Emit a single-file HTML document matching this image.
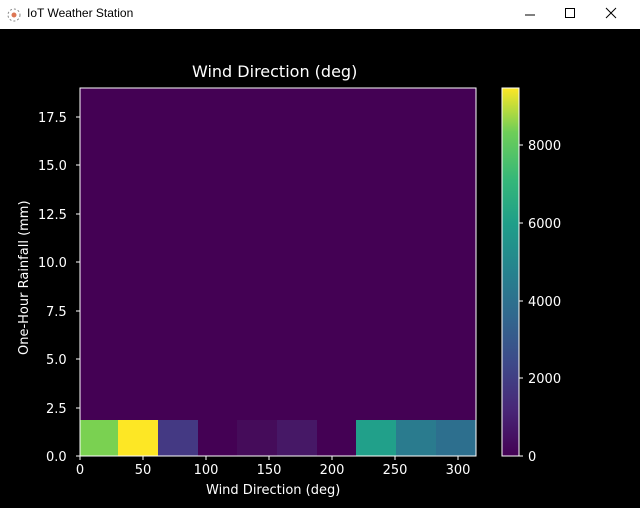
<!DOCTYPE html>
<html><head><style>
body{margin:0;width:640px;height:508px;background:#000;overflow:hidden;font-family:"DejaVu Sans","Liberation Sans",sans-serif;}
.tb{position:absolute;left:0;top:0;width:640px;height:29px;background:#fff;}
.t{position:absolute;font-size:13px;color:#fff;white-space:nowrap;}
.x{position:absolute;font-size:13px;color:#fff;width:60px;text-align:center;top:463px;}
</style></head><body>
<div class="tb">
<svg width="16" height="16" style="position:absolute;left:6px;top:7px" viewBox="0 0 16 16"><circle cx="8" cy="8" r="6" fill="none" stroke="#888" stroke-dasharray="2 2"/><circle cx="8" cy="8" r="2.5" fill="#d75"/></svg>
<span style="position:absolute;left:27px;top:6px;font:12px 'Liberation Sans',sans-serif;color:#000">IoT Weather Station</span>
<svg width="640" height="29" style="position:absolute;left:0;top:0"><line x1="525" y1="15" x2="535" y2="15" stroke="#000"/><rect x="565.5" y="8.5" width="9" height="9" fill="none" stroke="#000"/><path d="M606 8L616 18M616 8L606 18" stroke="#000"/></svg>
</div>
<svg width="640" height="508" style="position:absolute;left:0;top:0">
<defs><linearGradient id="v" x1="0" y1="1" x2="0" y2="0">
<stop offset="0" stop-color="#440154"/><stop offset="0.13" stop-color="#482878"/><stop offset="0.25" stop-color="#3e4989"/><stop offset="0.38" stop-color="#31688e"/><stop offset="0.5" stop-color="#26828e"/><stop offset="0.63" stop-color="#1f9e89"/><stop offset="0.75" stop-color="#35b779"/><stop offset="0.88" stop-color="#6ece58"/><stop offset="1" stop-color="#fde725"/></linearGradient></defs>
<rect x="80" y="88" width="396" height="368" fill="#440154"/>
<rect x="80" y="420" width="39" height="36" fill="#7ad151"/>
<rect x="118" y="420" width="40" height="36" fill="#fde725"/>
<rect x="158" y="420" width="40" height="36" fill="#443983"/>
<rect x="237" y="420" width="40" height="36" fill="#450c5a"/>
<rect x="277" y="420" width="40" height="36" fill="#461866"/>
<rect x="356" y="420" width="40" height="36" fill="#21a08a"/>
<rect x="396" y="420" width="40" height="36" fill="#2a7b8e"/>
<rect x="436" y="420" width="40" height="36" fill="#2d6f8e"/>
<rect x="80" y="88" width="396" height="368" fill="none" stroke="#fff" stroke-width="1"/>
<rect x="502" y="88" width="17" height="368" fill="url(#v)" stroke="#fff"/>
<g stroke="#fff">
<path d="M80 456v4M143 456v4M206 456v4M269 456v4M332 456v4M395 456v4M458 456v4"/>
<path d="M80 456h-4M80 408h-4M80 359h-4M80 311h-4M80 262h-4M80 214h-4M80 165h-4M80 117h-4"/>
<path d="M519 456h4M519 378h4M519 301h4M519 223h4M519 145h4"/>
</g>
</svg>
<div class="t" style="left:192px;top:62px;font-size:16px">Wind Direction (deg)</div>
<div class="t" style="left:206px;top:483px">Wind Direction (deg)</div>
<div class="t" style="transform:rotate(-90deg);transform-origin:0 0;top:355px;left:17px">One-Hour Rainfall (mm)</div>
<div class="x" style="left:50px">0</div>
<div class="x" style="left:113px">50</div>
<div class="x" style="left:176px">100</div>
<div class="x" style="left:239px">150</div>
<div class="x" style="left:302px">200</div>
<div class="x" style="left:365px">250</div>
<div class="x" style="left:428px">300</div>
<div class="t" style="left:46px;top:450px">0.0</div>
<div class="t" style="left:46px;top:402px">2.5</div>
<div class="t" style="left:46px;top:353px">5.0</div>
<div class="t" style="left:46px;top:305px">7.5</div>
<div class="t" style="left:38px;top:256px">10.0</div>
<div class="t" style="left:38px;top:208px">12.5</div>
<div class="t" style="left:38px;top:159px">15.0</div>
<div class="t" style="left:38px;top:111px">17.5</div>
<div class="t" style="left:528px;top:450px">0</div>
<div class="t" style="left:528px;top:372px">2000</div>
<div class="t" style="left:528px;top:295px">4000</div>
<div class="t" style="left:528px;top:217px">6000</div>
<div class="t" style="left:528px;top:139px">8000</div>
</body></html>
